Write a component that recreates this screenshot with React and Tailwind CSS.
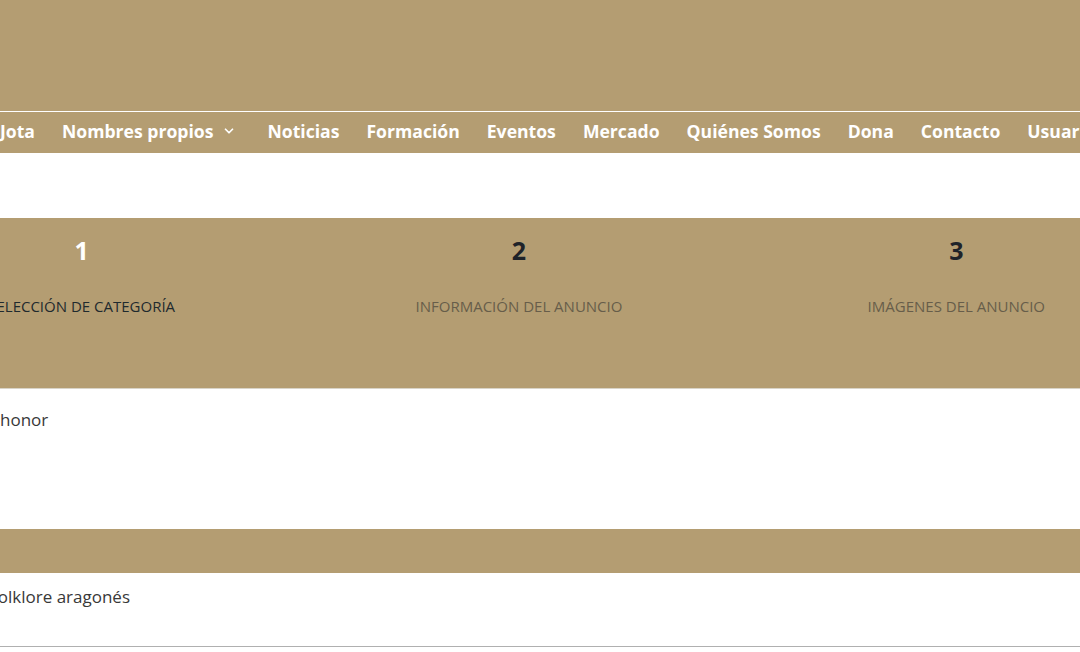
import { ChevronDown } from 'lucide-react';

const navItems = [
  { label: 'Jota' },
  { label: 'Nombres propios', dropdown: true },
  { label: 'Noticias' },
  { label: 'Formación' },
  { label: 'Eventos' },
  { label: 'Mercado' },
  { label: 'Quiénes Somos' },
  { label: 'Dona' },
  { label: 'Contacto' },
  { label: 'Usuarios' },
];

const steps = [
  { n: '1', label: 'Selección de categoría', active: true },
  { n: '2', label: 'Información del anuncio' },
  { n: '3', label: 'Imágenes del anuncio' },
];

export default function App() {
  return (
    <div
      className="w-[1080px] h-[652px] overflow-hidden bg-white"
      style={{ fontFamily: '"Open Sans", "Liberation Sans", sans-serif' }}
    >
      {/* Header */}
      <div className="h-[111px] bg-[#b49d72]" />
      <div className="h-px bg-white" />
      <nav className="h-[41px] bg-[#b49d72] flex items-center whitespace-nowrap pb-[3px]">
        <ul className="flex items-center gap-[27px] text-[17.6px] font-bold text-white">
          {navItems.map((item) => (
            <li key={item.label} className="flex items-center gap-[9px] shrink-0">
              {item.label}
              {item.dropdown && <ChevronDown className="w-[14px] h-[14px] mr-[4px]" strokeWidth={3} />}
            </li>
          ))}
        </ul>
      </nav>

      <div className="h-[65px]" />

      {/* Steps */}
      <div className="h-[171px] bg-[#b49d72] border-b border-[#d9d4c8]">
        <div className="-ml-[137px] w-[1312px] grid grid-cols-3 pt-[20px]">
          {steps.map((s) => (
            <div key={s.n} className="flex flex-col items-center">
              <div className={`text-[25px] font-bold leading-[24px] ${s.active ? 'text-white' : 'text-[#1f2329]'}`}>
                {s.n}
              </div>
              <div className={`mt-[33px] text-[15px] uppercase whitespace-nowrap ${s.active ? 'text-[#1f2a2e]' : 'text-[#675d4a]'}`}>
                {s.label}
              </div>
            </div>
          ))}
        </div>
      </div>

      {/* Content */}
      <div className="h-[140px] pt-[18px]">
        <p className="text-[17px] text-[#383838] leading-[26px]">honor</p>
      </div>
      <div className="h-[44px] bg-[#b49d72]" />
      <div className="h-[74px] border-b border-[#b0b0b0] pt-[11px]">
        <p className="-ml-[11px] text-[17px] text-[#383838] leading-[26px] whitespace-nowrap">Folklore aragonés</p>
      </div>
    </div>
  );
}
